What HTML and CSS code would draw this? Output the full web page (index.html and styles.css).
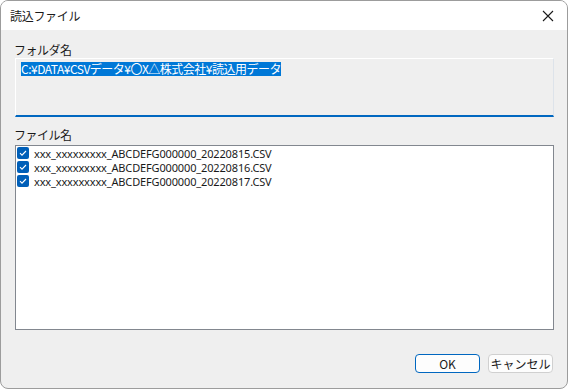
FILE: index.html
```html
<!DOCTYPE html>
<html lang="ja">
<head>
<meta charset="utf-8">
<title>読込ファイル</title>
<link rel="stylesheet" href="styles.css">
</head>
<body>
<div class="window">
  <div class="titlebar">
    <span class="title">読込ファイル</span>
    <svg class="close" width="12" height="12" viewBox="0 0 12 12"><path d="M1 1 L11 11 M11 1 L1 11" stroke="#1a1a1a" stroke-width="1.1" fill="none"/></svg>
  </div>
  <div class="content">
    <div class="label">フォルダ名</div>
    <div class="editbox"><span class="sel">C:¥DATA¥CSVデータ¥〇X△株式会社¥読込用データ</span></div>
    <div class="label label2">ファイル名</div>
    <div class="listbox">
      <div class="item"><span class="cb"><svg width="12" height="12" viewBox="0 0 12 12"><path d="M3 6.2 L5 8.2 L9 4" stroke="#fff" stroke-width="1.1" fill="none"/></svg></span>xxx_xxxxxxxxx_ABCDEFG000000_20220815.CSV</div>
      <div class="item"><span class="cb"><svg width="12" height="12" viewBox="0 0 12 12"><path d="M3 6.2 L5 8.2 L9 4" stroke="#fff" stroke-width="1.1" fill="none"/></svg></span>xxx_xxxxxxxxx_ABCDEFG000000_20220816.CSV</div>
      <div class="item"><span class="cb"><svg width="12" height="12" viewBox="0 0 12 12"><path d="M3 6.2 L5 8.2 L9 4" stroke="#fff" stroke-width="1.1" fill="none"/></svg></span>xxx_xxxxxxxxx_ABCDEFG000000_20220817.CSV</div>
    </div>
    <div class="buttons">
      <button class="btn default">OK</button>
      <button class="btn">キャンセル</button>
    </div>
  </div>
</div>
</body>
</html>
```
FILE: styles.css
```css
html, body {
  margin: 0;
  padding: 0;
  background: #ffffff;
}
body {
  font-family: "Noto Sans CJK JP", "Noto Sans", sans-serif;
  font-size: 12px;
  color: #1a1a1a;
}
* {
  box-sizing: border-box;
}
.window {
  width: 568px;
  height: 389px;
  border: 1px solid #9c9c9c;
  border-radius: 8px;
  overflow: hidden;
  display: flex;
  flex-direction: column;
  background: #efefef;
}
.titlebar {
  height: 29px;
  flex: none;
  background: #ffffff;
  display: flex;
  align-items: center;
  justify-content: space-between;
  padding: 0 13px 0 9px;
}
.title {
  font-size: 12px;
  line-height: 16px;
  letter-spacing: -0.3px;
}
.close {
  display: block;
}
.content {
  flex: 1;
  display: flex;
  flex-direction: column;
  padding: 12px 13px 0 13px;
}
.label {
  font-size: 12px;
  line-height: 16px;
  height: 16px;
  letter-spacing: -0.5px;
}
.label2 {
  margin-top: 10px;
}
.editbox {
  margin: 0 0 0 1px;
  width: 539px;
  height: 59px;
  border: 1px solid #ffffff;
  border-right-color: #dde3ea;
  border-bottom: 2px solid #0067c0;
  padding: 1px 5px;
}
.sel {
  background: #0078d7;
  color: #ffffff;
  font-size: 12px;
  line-height: 14px;
  letter-spacing: -0.5px;
  display: inline-block;
  height: 14px;
}
.listbox {
  margin: 2px 0 0 1px;
  width: 539px;
  height: 185px;
  border: 1px solid #82878f;
  background: #ffffff;
  padding: 0 0 0 1px;
}
.item {
  display: flex;
  align-items: center;
  height: 14px;
  font-family: "Noto Sans", "Noto Sans CJK JP", sans-serif;
  font-size: 11px;
  letter-spacing: -0.15px;
  white-space: nowrap;
}
.cb {
  width: 12px;
  height: 12px;
  border-radius: 2px;
  background: #005fb8;
  margin-right: 5px;
  display: flex;
}
.buttons {
  display: flex;
  justify-content: flex-end;
  gap: 8px;
  margin-top: 24px;
  padding-right: 1px;
}
.btn {
  width: 65px;
  height: 19px;
  padding: 0;
  font-family: "Noto Sans CJK JP", "Noto Sans", sans-serif;
  font-size: 12px;
  line-height: 15px;
  color: #1a1a1a;
  background: #fdfdfd;
  border: 1px solid #d0d0d0;
  border-radius: 4px;
}
.btn.default {
  border-color: #0067c0;
}
```
